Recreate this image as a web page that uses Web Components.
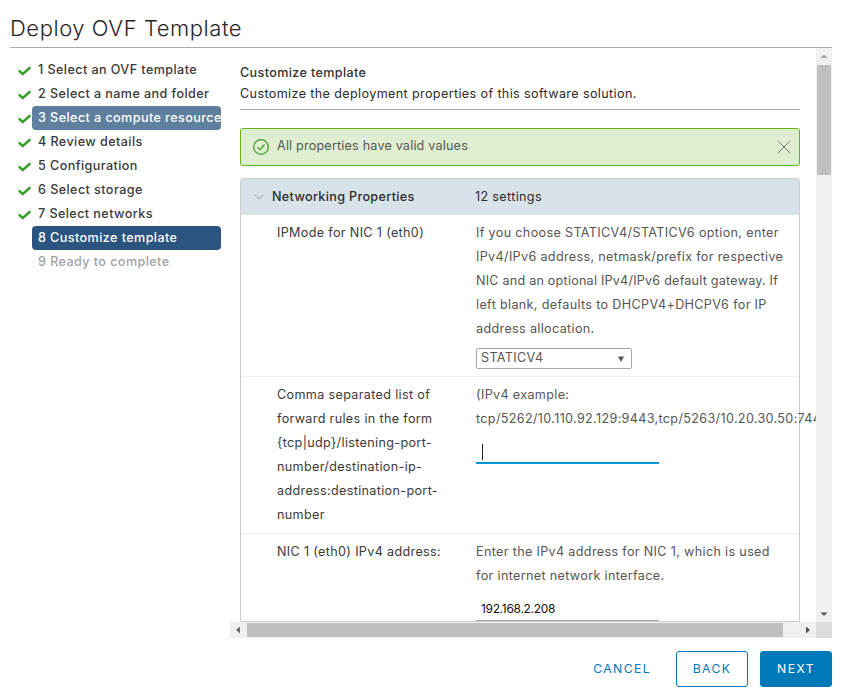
<!DOCTYPE html>
<html><head><meta charset="utf-8"><style>
html,body{margin:0;padding:0;background:#fff;overflow:hidden}
body{font-family:Inter,"Liberation Sans",sans-serif;color:#565656}
</style></head><body>
<ovf-wizard>
  <span slot="title">Deploy OVF Template</span>
  <wizard-step slot="nav" done>1 Select an OVF template</wizard-step>
  <wizard-step slot="nav" done>2 Select a name and folder</wizard-step>
  <wizard-step slot="nav" done state="visited">3 Select a compute resource</wizard-step>
  <wizard-step slot="nav" done>4 Review details</wizard-step>
  <wizard-step slot="nav" done>5 Configuration</wizard-step>
  <wizard-step slot="nav" done>6 Select storage</wizard-step>
  <wizard-step slot="nav" done>7 Select networks</wizard-step>
  <wizard-step slot="nav" state="current">8 Customize template</wizard-step>
  <wizard-step slot="nav" state="disabled">9 Ready to complete</wizard-step>

  <page-head>
    <span slot="title">Customize template</span>
    Customize the deployment properties of this software solution.
  </page-head>
  <ok-alert>All properties have valid values</ok-alert>
  <prop-stack label="Networking Properties" count="12 settings">
    <prop-row top="6" bottom="7" label="IPMode for NIC 1 (eth0)">
      <span style="white-space:nowrap">If you choose STATICV4/STATICV6 option, enter<br>IPv4/IPv6 address, netmask/prefix for respective<br><span style="letter-spacing:.22px">NIC and an optional IPv4/IPv6 default gateway. If</span><br>left blank, defaults to DHCPV4+DHCPV6 for IP<br>address allocation.</span>
      <fake-select slot="control">STATICV4</fake-select>
    </prop-row>
    <prop-row top="6" bottom="6" label="Comma separated list of forward rules in the form {tcp|udp}/listening-port-number/destination-ip-address:destination-port-number">
      (IPv4 example:<br><span style="white-space:nowrap">tcp/5262/10.110.92.129:9443,tcp/5263/10.20.30.50:7443</span>
      <line-input slot="control" focused></line-input>
    </prop-row>
    <prop-row top="6" bottom="0" last label="NIC 1 (eth0) IPv4 address:">
      Enter the IPv4 address for NIC 1, which is used for internet network interface.
      <line-input slot="control" value="192.168.2.208"></line-input>
    </prop-row>
  </prop-stack>

  <wiz-button slot="actions" kind="flat">CANCEL</wiz-button>
  <wiz-button slot="actions" kind="outline">BACK</wiz-button>
  <wiz-button slot="actions" kind="primary">NEXT</wiz-button>
</ovf-wizard>
<script>
function def(name, css, html, init){
  customElements.define(name, class extends HTMLElement{
    constructor(){super();this.attachShadow({mode:'open'});}
    connectedCallback(){
      const g=a=>this.getAttribute(a)||'';
      this.shadowRoot.innerHTML='<style>'+css+'</style>'+(typeof html==='function'?html(g,this):html);
      if(init)init(this);
    }
  });
}

def('ovf-wizard',`
  :host{display:grid;width:847px;height:697px;grid-template-rows:48px 590px 13px 36px;grid-template-columns:10px 220px 586px 16px 15px;box-sizing:border-box}
  .title{grid-column:2/5;grid-row:1;border-bottom:1px solid #a8a8a8;font:300 22px/1 Inter,"Liberation Sans",sans-serif;color:#262626;letter-spacing:.55px;padding-top:17px;box-sizing:border-box;height:48px}
  nav{grid-column:2;grid-row:2;display:flex;flex-direction:column;padding-top:10px;padding-right:9px}
  .view{grid-column:3;grid-row:2;height:574px;overflow:hidden;padding-left:10px;box-sizing:border-box}
  .vbar{grid-column:4;grid-row:2;height:574px;background:#f0f0f0;position:relative;display:flex;flex-direction:column;align-items:center}
  .vthumb{width:14px;height:110px;background:#bfbfbf;margin-top:1px}
  .up,.down{height:16px;width:16px;display:block}
  .down{margin-top:auto}
  .hbar{grid-column:3;grid-row:2;align-self:end;height:16px;background:#f0f0f0;display:flex;align-items:center}
  .hthumb{height:14px;width:536px;background:#bfbfbf;margin-left:1px}
  .l,.r{width:16px;height:16px;display:block}
  .r{margin-left:auto}
  .corner{grid-column:4;grid-row:2;align-self:end;width:16px;height:16px;background:#dcdcdc}
  .foot{grid-column:3/5;grid-row:4;display:flex;justify-content:flex-end;gap:12px;align-items:stretch}
`,`
  <div class="title"><slot name="title"></slot></div>
  <nav><slot name="nav"></slot></nav>
  <div class="view"><slot></slot></div>
  <div class="vbar">
    <svg class="up" viewBox="0 0 16 16"><path d="M4.500 10 8 6.500 11.500 10z" fill="#a0a0a0"/></svg>
    <div class="vthumb"></div>
    <svg class="down" viewBox="0 0 16 16"><path d="M4.500 6.500 8 10 11.500 6.500z" fill="#505050"/></svg>
  </div>
  <div class="hbar">
    <svg class="l" viewBox="0 0 16 16"><path d="M10 4.500 6 8 10 11.500z" fill="#6a6a6a"/></svg>
    <div class="hthumb"></div>
    <svg class="r" viewBox="0 0 16 16"><path d="M6 4.500 10 8 6 11.500z" fill="#505050"/></svg>
  </div>
  <div class="corner"></div>
  <div class="foot"><slot name="actions"></slot></div>
`);

def('wizard-step',`
  :host{display:block;height:24px;position:relative;font:500 12.600px/24px Inter,"Liberation Sans",sans-serif;letter-spacing:.42px;color:#3a3a3a;white-space:nowrap}
  .pill{margin-left:22px;height:24px;padding-left:6px;border-radius:4px;overflow:hidden}
  :host([state=visited]) .pill{background:#5f7f9f;color:#fff}
  :host([state=current]) .pill{background:#2b5580;color:#fff}
  :host([state=disabled]) .pill{color:#a3a3a3}
  svg{position:absolute;left:8px;top:8px}
`,(g,el)=>`${el.hasAttribute('done')?'<svg width="13" height="10" viewBox="0 0 13 10"><path d="M.8 4.500 4.700 8 12.500 1.200" fill="none" stroke="#3c9f2e" stroke-width="2.600"/></svg>':''}<div class="pill"><slot></slot></div>`);

def('page-head',`
  :host{display:block;width:560px;height:62px;border-bottom:1px solid #a8a8a8;font:400 12.600px/21px Inter,"Liberation Sans",sans-serif;letter-spacing:.37px;color:#2b2b2b;padding-top:14px;box-sizing:border-box}
  .t{display:block;font-weight:500;color:#333}
`,`<span class="t"><slot name="title"></slot></span><slot></slot>`);

def('ok-alert',`
  :host{display:flex;align-items:center;width:560px;height:38px;margin-top:18px;box-sizing:border-box;background:#dfeed0;border:1px solid #5eb715;border-radius:3px;font:400 12.600px/1 Inter,"Liberation Sans",sans-serif;letter-spacing:.19px;color:#565656;padding:0 7px 1px 12px}
  .i{margin-right:8px;display:block}
  .x{margin-left:auto;display:block}
`,`<svg class="i" width="16" height="16" viewBox="0 0 16 16"><circle cx="8" cy="8" r="7.300" fill="none" stroke="#3f9a2b" stroke-width="1.300"/><path d="M4.500 8.200 7 10.700 11.500 5.500" fill="none" stroke="#3f9a2b" stroke-width="1.200"/></svg><span><slot></slot></span>
<svg class="x" width="16" height="16" viewBox="0 0 16 16"><path d="M1.500 1.500 14.500 14.500M14.500 1.500 1.500 14.500" stroke="#7a7a7a" stroke-width="1"/></svg>`);

def('prop-stack',`
  :host{display:block;width:560px;margin-top:12px;box-sizing:border-box;border:1px solid #ccc;border-radius:3px 3px 0 0;font:400 12.600px/24px Inter,"Liberation Sans",sans-serif;letter-spacing:.34px;color:#565656}
  .h{height:36px;background:#d8e3e9;display:flex;align-items:center;color:#2b2b2b;font-weight:500}
  .c{width:31px;display:block}
  .n{width:203px}
  .s{font-weight:400}
`,(g)=>`<div class="h"><span class="c"><svg style="display:block;margin-left:13px" width="10" height="8" viewBox="0 0 10 8"><path d="M1 2 5 6 9 2" fill="none" stroke="#9a9a9a" stroke-width="1"/></svg></span><span class="n">${g('label')}</span><span class="s">${g('count')}</span></div><slot></slot>`);

def('prop-row',`
  :host{display:grid;grid-template-columns:199px 304px;box-sizing:border-box;border-bottom:1px solid #eee;padding-left:36px}
  :host([last]){border-bottom:0}
  .v{min-width:0}
`,(g,el)=>`<div class="l" style="padding:${g('top')}px 0 ${g('bottom')}px;color:#3a3a3a;width:175px">${g('label')}</div><div class="v" style="padding:${g('top')}px 0 ${g('bottom')}px"><slot></slot><slot name="control"></slot></div>`);

def('fake-select',`
  :host{display:flex;align-items:center;width:156px;height:21px;margin-top:7px;box-sizing:border-box;border:1px solid #a8a8a8;border-radius:2px;padding:0 6px 0 4px;font-size:12.600px;line-height:1;color:#565656}
  svg{margin-left:auto;display:block}
`,`<slot></slot><svg width="8" height="8" viewBox="0 0 8 8"><path d="M1 1.500H7L4 7z" fill="#555"/></svg>`);

def('line-input',`
  :host{display:block;width:183px;height:24px;margin-top:9px;box-sizing:border-box;border-bottom:1px solid #a8a8a8;padding:1px 0 0 5px;font-size:12px;line-height:21px;color:#111;letter-spacing:-.3px}
  :host([focused]){border-bottom:2px solid #0095d3;height:27px;margin-top:6px;padding:7px 0 0 6px}
  .caret{display:block;width:1px;height:16px;background:#222}
`,(g,el)=>el.hasAttribute('focused')?'<span class="caret"></span>':`<span>${g('value')}</span>`);

def('wiz-button',`
  :host{display:flex;align-items:center;justify-content:center;width:72px;box-sizing:border-box;border:1px solid #0079b8;border-radius:3px;padding-top:1px;font:400 12.200px/1 Inter,"Liberation Sans",sans-serif;letter-spacing:1.400px;color:#0079b8}
  :host([kind=primary]){background:#0079b8;color:#fff}
  :host([kind=flat]){border-color:transparent;width:auto;padding:1px 12px 0 14px}
`,`<slot></slot>`);
</script>
</body></html>
